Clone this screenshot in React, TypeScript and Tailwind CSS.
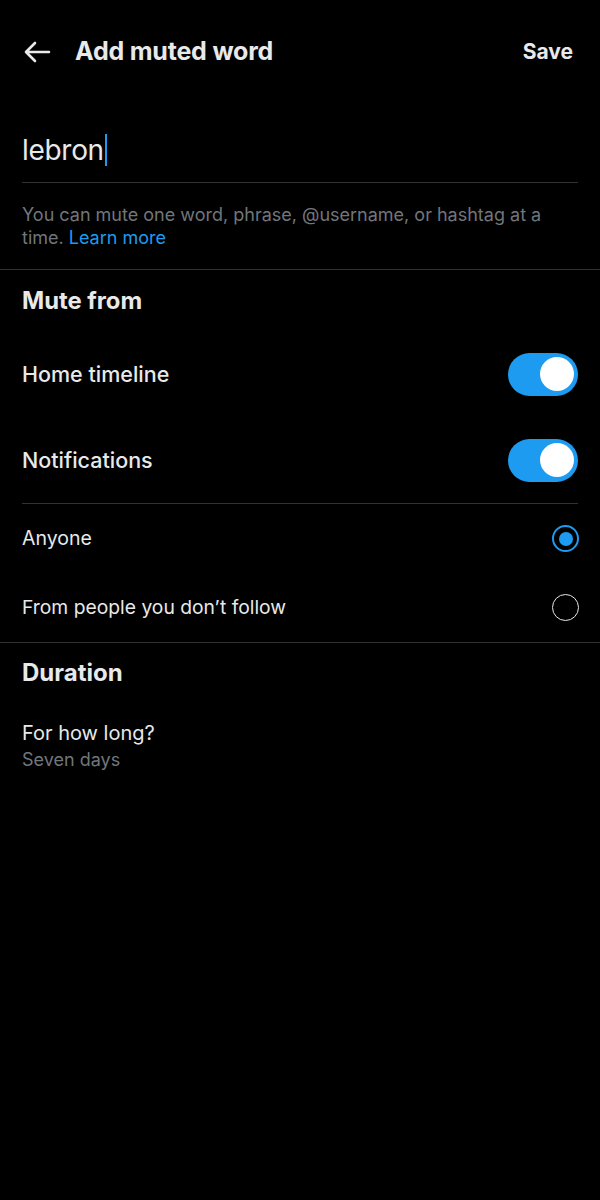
import React from "react";

const Toggle = () => (
  <div className="w-[70px] h-[43px] rounded-full bg-[#1d9bf0] flex items-center justify-end pr-[4px]">
    <div className="w-[34px] h-[34px] rounded-full bg-white" />
  </div>
);

export default function App() {
  return (
    <div
      className="w-[600px] h-[1200px] bg-black text-[#e7e9ea] flex flex-col"
      style={{ fontFamily: "Inter, 'Noto Sans', sans-serif" }}
    >
      {/* Header */}
      <div className="h-[104px] flex items-center px-[22px]">
        <svg width="30" height="24" viewBox="0 0 30 24" className="mr-[23px]">
          <path d="M27 12H4M13 3l-9 9 9 9" stroke="#e7e9ea" strokeWidth="2.6" fill="none" strokeLinecap="round" strokeLinejoin="round" />
        </svg>
        <div className="text-[25px] font-bold flex-1 tracking-[-0.2px]">Add muted word</div>
        <div className="text-[21px] font-bold mr-[5px]">Save</div>
      </div>

      {/* Input */}
      <div className="mx-[22px] h-[79px] pt-[14px] border-b border-[#2f3336] flex items-center">
        <span className="text-[28px] tracking-[-0.3px]">lebron</span>
        <span className="w-[2px] h-[32px] bg-[#1d9bf0] ml-[1px]" />
      </div>
      <p className="px-[22px] pt-[20px] pb-[20px] text-[18px] leading-[23px] text-[#71767b] border-b border-[#2f3336]">
        You can mute one word, phrase, @username, or hashtag at a time. <span className="text-[#1d9bf0]">Learn more</span>
      </p>

      {/* Mute from */}
      <div className="px-[22px] pt-[17px] text-[23.8px] font-bold leading-[28px]">Mute from</div>
      <div className="mx-[22px] flex flex-col mt-[16px]">
        <div className="h-[86px] flex items-center justify-between">
          <span className="text-[21.5px] font-medium">Home timeline</span>
          <Toggle />
        </div>
        <div className="h-[86px] flex items-center justify-between">
          <span className="text-[21.5px] font-medium">Notifications</span>
          <Toggle />
        </div>
        <div className="border-t border-[#2f3336]" />
        <div className="h-[69px] flex items-center justify-between">
          <span className="text-[19.5px]">Anyone</span>
          <div className="w-[27px] h-[27px] rounded-full border-[2.5px] border-[#1d9bf0] flex items-center justify-center -mr-[1px]">
            <div className="w-[14px] h-[14px] rounded-full bg-[#1d9bf0]" />
          </div>
        </div>
        <div className="h-[69px] flex items-center justify-between">
          <span className="text-[19.3px]">From people you don’t follow</span>
          <div className="w-[27px] h-[27px] rounded-full border-[1.5px] border-[#e7e9ea] -mr-[1px]" />
        </div>
      </div>
      <div className="border-t border-[#2f3336]" />

      {/* Duration */}
      <div className="px-[22px] pt-[16px] text-[24px] font-bold leading-[28px]">Duration</div>
      <div className="px-[22px] pt-[33px]">
        <div className="text-[20px] leading-[26px]">For how long?</div>
        <div className="text-[18px] leading-[28px] text-[#71767b]">Seven days</div>
      </div>
    </div>
  );
}
